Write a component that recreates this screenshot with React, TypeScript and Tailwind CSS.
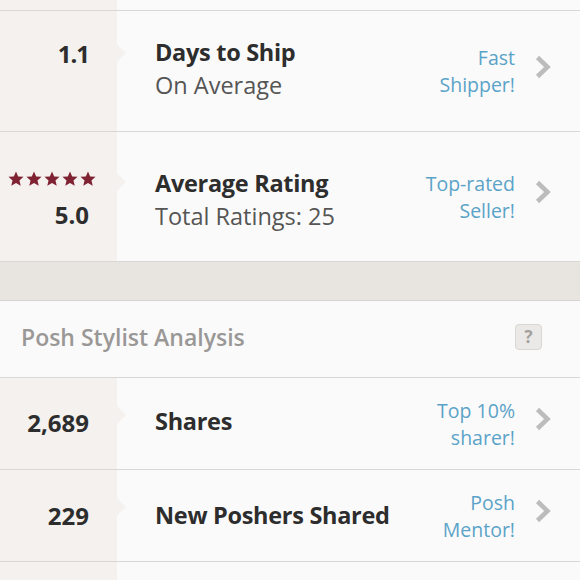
import React from "react";

const Star = () => (
  <svg width="16" height="16" viewBox="0 0 24 24" className="block">
    <path d="M12 0.8l3.3 7.4 8 .6-6.1 5.3 1.9 7.9L12 17.9 4.9 22l1.9-7.9L.7 8.8l8-.6z" fill="#7f2333" />
  </svg>
);

const Chevron = () => (
  <svg width="18" height="24" viewBox="0 0 18 24" className="block mb-[9px]">
    <path d="M3.5 2.5 L13.5 12 L3.5 21.5" fill="none" stroke="#bcbcbc" strokeWidth="4.5" />
  </svg>
);

type RowProps = {
  h: string;
  titlePad?: string;
  left: React.ReactNode;
  title: string;
  sub?: string;
  blue: [string, string];
  notchTop: string;
};

function Row({ h, titlePad = "", left, title, sub, blue, notchTop }: RowProps) {
  return (
    <div className={`relative flex ${h} border-b border-[#dad8d6]`}>
      <div className="w-[117px] shrink-0 bg-[#f4f1ee] flex flex-col justify-center items-end pr-[28px]">
        {left}
      </div>
      <div className={`absolute left-[117px] ${notchTop} w-0 h-0 border-y-[9px] border-y-transparent border-l-[9px] border-l-[#f4f1ee]`} />
      <div className="flex-1 flex items-center pl-[38px] pr-[28px]">
        <div className={`flex-1 flex flex-col ${titlePad}`}>
          <div className="text-[23.5px] leading-[33px] font-bold text-[#2d2d2d] tracking-[-0.3px]">{title}</div>
          {sub && <div className="text-[23.5px] leading-[33px] text-[#555555]">{sub}</div>}
        </div>
        <div className="flex flex-col items-end text-[19.5px] leading-[27px] text-[#5aa3c8] mr-[19px]">
          <span>{blue[0]}</span>
          <span>{blue[1]}</span>
        </div>
        <Chevron />
      </div>
    </div>
  );
}

const num = "text-[24px] leading-[33px] font-bold text-[#2d2d2d]";

export default function App() {
  return (
    <div className="w-[580px] h-[580px] overflow-hidden bg-[#fbfafa]" style={{ fontFamily: "'Open Sans', Lato, sans-serif" }}>
      <div className="flex h-[11px] border-b border-[#dad8d6]">
        <div className="w-[117px] bg-[#f4f1ee]" />
      </div>
      <Row
        h="h-[121px]"
        titlePad="pb-[5px]"
        notchTop="top-[33px]"
        left={
          <>
            <div className={`${num} tracking-[-1px] mb-[3px]`}>1.1</div>
            <div className="h-[33px]" />
          </>
        }
        title="Days to Ship"
        sub="On Average"
        blue={["Fast", "Shipper!"]}
      />
      <Row
        h="h-[130px]"
        titlePad="pt-[6px]"
        notchTop="top-[41px]"
        left={
          <>
            <div className="h-[33px] flex items-center gap-[2px] mr-[-7px]">
              <Star />
              <Star />
              <Star />
              <Star />
              <Star />
            </div>
            <div className={`${num} mt-[2px]`}>5.0</div>
          </>
        }
        title="Average Rating"
        sub="Total Ratings: 25"
        blue={["Top-rated", "Seller!"]}
      />
      <div className="h-[39px] bg-[#e8e5e1] border-b border-[#d6d3d0]" />
      <div className="h-[77px] flex items-center pl-[21px] pr-[38px] border-b border-[#dad8d6]">
        <div className="flex-1 text-[23px] font-semibold text-[#9a9896] pb-[3px]">Posh Stylist Analysis</div>
        <div className="w-[27px] h-[26px] rounded-[4px] bg-[#ebe9e7] border border-[#d9d6d3] flex items-center justify-center text-[17px] font-bold text-[#a3a09d] mb-[4px]">
          ?
        </div>
      </div>
      <Row
        h="h-[92px]"
        titlePad="pb-[5px]"
        notchTop="top-[28px]"
        left={<div className={`${num} mb-[3px]`}>2,689</div>}
        title="Shares"
        blue={["Top 10%", "sharer!"]}
      />
      <Row
        h="h-[92px]"
        notchTop="top-[28px]"
        left={<div className={num}>229</div>}
        title="New Poshers Shared"
        blue={["Posh", "Mentor!"]}
      />
      <div className="flex h-[40px]">
        <div className="w-[117px] bg-[#f4f1ee]" />
      </div>
    </div>
  );
}
